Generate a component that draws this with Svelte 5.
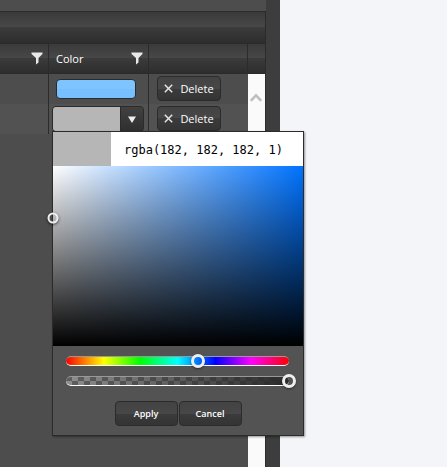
<script lang="ts">
  type Row = { id: number; color: string; editing: boolean };

  let rows = $state<Row[]>([
    { id: 1, color: '#76c0ff', editing: false },
    { id: 2, color: '#b6b6b6', editing: true },
  ]);
  let hue = $state(213);
  let alpha = $state(100);
  let sat = $state(0);
  let val = $state(71.2);
  let text = $state('rgba(182, 182, 182, 1)');
  let open = $state(true);

  function remove(id: number) {
    rows = rows.filter((r) => r.id !== id);
  }

  function toRgb() {
    const v = val / 100;
    const s = sat / 100;
    const f = (n: number) => {
      const k = (n + hue / 60) % 6;
      return Math.round(255 * (v - v * s * Math.max(0, Math.min(k, 4 - k, 1))));
    };
    return [f(5), f(3), f(1)];
  }

  function update() {
    text = `rgba(${toRgb().join(', ')}, ${alpha / 100})`;
  }

  function pick(e: PointerEvent) {
    const box = (e.currentTarget as HTMLElement).getBoundingClientRect();
    sat = ((e.clientX - box.left) / box.width) * 100;
    val = 100 - ((e.clientY - box.top) / box.height) * 100;
    update();
  }

  function apply(row: Row) {
    row.color = text;
    open = false;
  }
</script>

{#snippet funnel()}
  <button class="filter" type="button" aria-label="Filter">
    <svg width="12" height="13" viewBox="0 0 12 13">
      <path d="M0.5 0.5h11v1.5L7.5 6v4.5L5 12.5V6L0.5 2z" fill="#e8e8e8" />
    </svg>
  </button>
{/snippet}

<div class="page">
  <main class="panel">
    <div class="strip"></div>
    <div class="toolbar"></div>
    <div class="grid">
      <div class="content">
        <table>
          <thead>
            <tr>
              <th class="name"><div class="head">{@render funnel()}</div></th>
              <th class="color"><div class="head"><span>Color</span>{@render funnel()}</div></th>
              <th class="command"></th>
            </tr>
          </thead>
          <tbody>
            {#each rows as row (row.id)}
              <tr>
                <td></td>
                <td class:edit={row.editing}>
                  {#if row.editing}
                    <div class="picker">
                      <button class="combo" type="button" aria-label="Choose color" onclick={() => (open = !open)}>
                        <span class="swatch" style="background: {row.color}"></span>
                        <span class="arrow">
                          <svg width="8" height="7" viewBox="0 0 8 7"><path d="M0 0.5h8L4 7z" fill="#eee" /></svg>
                        </span>
                      </button>
                      {#if open}
                        <div class="popup">
                          <div class="value">
                            <span class="preview" style="background: {text}"></span>
                            <input type="text" aria-label="Color value" spellcheck="false" bind:value={text} />
                          </div>
                          <!-- svelte-ignore a11y_no_static_element_interactions -->
                          <div class="area" style="--hue: hsl({hue} 100% 50%)" onpointerdown={pick}>
                            <span class="dot" style="left: {sat}%; top: {100 - val}%"></span>
                          </div>
                          <div class="sliders">
                            <div class="track hue">
                              <input type="range" aria-label="Hue" min="0" max="360" bind:value={hue} oninput={update} />
                            </div>
                            <div class="track alpha">
                              <input type="range" aria-label="Opacity" min="0" max="100" bind:value={alpha} oninput={update} />
                            </div>
                          </div>
                          <div class="actions">
                            <button class="btn small" type="button" onclick={() => apply(row)}>Apply</button>
                            <button class="btn small" type="button" onclick={() => (open = false)}>Cancel</button>
                          </div>
                        </div>
                      {/if}
                    </div>
                  {:else}
                    <div class="cell-color" style="background-color: {row.color}"></div>
                  {/if}
                </td>
                <td>
                  <button class="btn" type="button" onclick={() => remove(row.id)}>
                    <svg width="9" height="9" viewBox="0 0 9 9">
                      <path d="M0.8 0.8l7.4 7.4M8.2 0.8L0.8 8.2" stroke="#e4e4e4" stroke-width="1.5" />
                    </svg>
                    Delete
                  </button>
                </td>
              </tr>
            {/each}
          </tbody>
        </table>
      </div>
      <div class="side">
        <div class="cap"></div>
        <div class="scrollbar">
          <svg width="12" height="9" viewBox="0 0 12 9">
            <path d="M0.8 7.8L6 2.4l5.2 5.4" fill="none" stroke="#bfbfbf" stroke-width="2.6" />
          </svg>
        </div>
      </div>
    </div>
  </main>
</div>

<style>
  :global(body) {
    margin: 0;
    background: #f4f5f8;
  }
  .page {
    display: flex;
    min-height: 100vh;
    padding-right: 167px;
    box-sizing: border-box;
    font-family: 'Open Sans', 'Noto Sans', sans-serif;
    font-size: 11px;
    color: #fff;
  }
  .panel {
    flex: 1;
    display: flex;
    flex-direction: column;
    min-width: 0;
    padding-right: 14px;
    background: #3d3d3d;
  }
  .strip {
    height: 11px;
    background: #4d4d4d;
  }
  .toolbar,
  th,
  .cap {
    background: linear-gradient(#3a3a3a, #484848 50%, #3b3b3b 50%, #2d2d2d);
  }
  .toolbar {
    height: 31px;
    border-top: 1px solid #2b2b2b;
    border-right: 1px solid #2b2b2b;
  }
  .grid {
    flex: 1;
    display: flex;
    border-right: 1px solid #2b2b2b;
    background: #4d4d4d;
  }
  .content {
    flex: 1;
  }
  table {
    width: 100%;
    table-layout: fixed;
    border-collapse: separate;
    border-spacing: 0;
  }
  th {
    box-sizing: border-box;
    height: 31px;
    padding: 0;
    border: 1px solid #2b2b2b;
    border-left: 0;
    font-weight: 400;
  }
  th.color {
    width: 100px;
  }
  th.command {
    width: 99px;
  }
  .head {
    display: flex;
    align-items: center;
    justify-content: space-between;
    padding: 0 5px 0 7px;
  }
  .head .filter {
    margin-left: auto;
  }
  .filter {
    display: flex;
    padding: 0;
    border: 0;
    background: none;
  }
  td {
    box-sizing: border-box;
    height: 30px;
    padding: 0 7px;
    border-right: 1px solid #2b2b2b;
  }
  td:last-child {
    padding: 0 8px 2px;
    border-right: 0;
  }
  tr:nth-child(even) td {
    background: #525252;
  }
  td.edit {
    padding: 0 4px 0 3px;
  }
  .cell-color {
    height: 18px;
    width: 78px;
    border: 1px solid #2b2b2b;
    border-radius: 4px;
    background-image: linear-gradient(rgba(255, 255, 255, 0.06) 50%, transparent 50%);
  }
  .picker {
    position: relative;
  }
  .combo {
    display: flex;
    box-sizing: border-box;
    width: 92px;
    height: 26px;
    padding: 0;
    overflow: hidden;
    border: 1px solid #2b2b2b;
    border-radius: 4px;
    background: #2b2b2b;
  }
  .swatch {
    width: 67px;
  }
  .arrow {
    flex: 1;
    display: flex;
    align-items: center;
    justify-content: center;
    margin-left: 1px;
    background: linear-gradient(#414141, #2f2f2f);
  }
  .btn {
    display: flex;
    align-items: center;
    justify-content: center;
    gap: 7px;
    box-sizing: border-box;
    width: 64px;
    height: 25px;
    padding: 0;
    border: 1px solid #2b2b2b;
    border-radius: 4px;
    background: linear-gradient(#434343, #474747 50%, #3b3b3b 50%, #343434);
    color: #fff;
    font: inherit;
  }
  .btn.small {
    width: 63px;
    font-size: 9px;
    font-weight: 600;
  }
  .popup {
    position: absolute;
    top: 25px;
    left: 0;
    z-index: 1;
    width: 250px;
    border: 1px solid #2b2b2b;
    background: #535353;
    box-shadow: 1px 1px 2px rgba(0, 0, 0, 0.4);
  }
  .value {
    display: flex;
    height: 34px;
  }
  .preview {
    width: 58px;
  }
  .value input {
    flex: 1;
    min-width: 0;
    padding: 2px 0 0 13px;
    border: 0;
    outline: 0;
    background: #fff;
    color: #000;
    font: 12px 'DejaVu Sans Mono', monospace;
  }
  .area {
    position: relative;
    height: 180px;
    background:
      linear-gradient(transparent, #000),
      linear-gradient(to right, #fff, transparent),
      var(--hue);
  }
  .dot {
    position: absolute;
    width: 7px;
    height: 7px;
    border: 2px solid #eee;
    border-radius: 50%;
    transform: translate(-50%, -50%);
    box-shadow: 0 1px 3px rgba(0, 0, 0, 0.7);
  }
  .sliders {
    display: flex;
    flex-direction: column;
    gap: 10px;
    padding: 10px 14px 15px 13px;
  }
  .track {
    display: flex;
    align-items: center;
    box-sizing: border-box;
    height: 10px;
    border-top: 1px solid #999;
    border-bottom: 1px solid #fff;
    border-radius: 5px;
  }
  .hue {
    background: linear-gradient(to right, #f00, #ff0 17%, #0f0 33%, #0ff 50%, #00f 67%, #f0f 83%, #f00);
  }
  .alpha {
    background:
      linear-gradient(to right, transparent, #2b2b2b),
      conic-gradient(#8f8f8f 25%, #5f5f5f 0 50%, #8f8f8f 0 75%, #5f5f5f 0) 0 0 / 12px 8px;
  }
  .track input {
    flex: 1;
    min-width: 0;
    height: 14px;
    margin: 0 -7px;
    appearance: none;
    background: none;
  }
  .track input::-webkit-slider-thumb {
    appearance: none;
    box-sizing: border-box;
    width: 14px;
    height: 14px;
    border: 3px solid #eee;
    border-radius: 50%;
    background: transparent;
    box-shadow: 0 1px 2px rgba(0, 0, 0, 0.5);
  }
  .actions {
    display: flex;
    justify-content: center;
    gap: 1px;
    padding: 0 0 9px;
  }
  .side {
    display: flex;
    flex-direction: column;
    width: 17px;
  }
  .cap {
    height: 29px;
    border: 1px solid #2b2b2b;
    border-width: 1px 0;
  }
  .scrollbar {
    flex: 1;
    padding: 16px 0 0 2px;
    background: #fafafa;
  }
</style>
